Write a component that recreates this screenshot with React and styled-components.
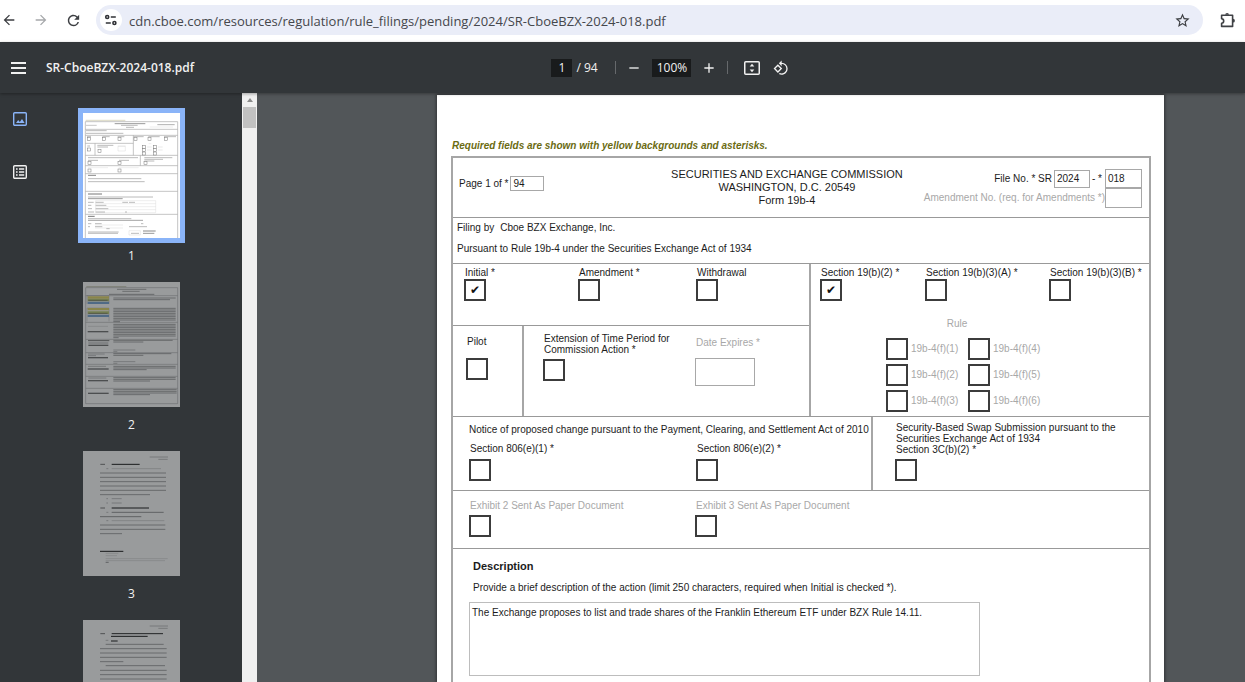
import React from "react";
import styled, { createGlobalStyle } from "styled-components";
import { MdArrowBack, MdArrowForward, MdRefresh, MdStarBorder, MdRotate90DegreesCcw, MdAdd, MdRemove } from "react-icons/md";

const UI_FONT = `"Open Sans", "Noto Sans", sans-serif`;
const DOC_FONT = `"Liberation Sans", Arial, sans-serif`;

const GlobalStyle = createGlobalStyle`
  *, *::before, *::after { box-sizing: border-box; }
  body { margin: 0; font-family: ${UI_FONT}; }
  button { padding: 0; border: 0; background: none; color: inherit; font: inherit; }
`;

const Shell = styled.div`
  display: flex;
  flex-direction: column;
  height: 100vh;
  overflow: hidden;
  background: #525659;
`;

/* ---------- browser bar ---------- */

const BrowserBar = styled.header`
  flex: none;
  display: flex;
  align-items: center;
  height: 42px;
  padding: 0 8px 2px 0;
  background: #fff;
  color: #3c3e42;
`;

const NavButton = styled.button`
  display: grid;
  place-items: center;
  width: 32px;
  height: 24px;
  color: ${(p) => (p.disabled ? "#a6a8ab" : "inherit")};
`;

const NavGroup = styled.nav`
  display: flex;
  flex: none;
  width: 96px;
  margin-left: -7px;
`;

const Omnibox = styled.div`
  flex: 1;
  display: flex;
  align-items: center;
  height: 30px;
  margin-left: 7px;
  padding: 0 13px 0 4px;
  border-radius: 15px;
  background: #eaedf8;
`;

const SiteButton = styled.button`
  display: grid;
  place-items: center;
  flex: none;
  width: 22px;
  height: 22px;
  border-radius: 50%;
  background: #fff;
`;

const UrlInput = styled.input`
  flex: 1;
  min-width: 0;
  height: 22px;
  margin: 0 8px 0 7px;
  padding: 2px 0 0;
  border: 0;
  outline: 0;
  background: none;
  color: #45474c;
  font: 13px/20px ${UI_FONT};
`;

const ExtensionButton = styled.button`
  display: grid;
  place-items: center;
  flex: none;
  width: 18px;
  height: 20px;
  margin-left: 16px;
`;

/* ---------- viewer toolbar ---------- */

const Toolbar = styled.div`
  flex: none;
  position: relative;
  z-index: 1;
  display: grid;
  grid-template-columns: 552fr auto 456fr;
  align-items: center;
  height: 51px;
  background: #323639;
  color: #f1f1f1;
  box-shadow: 0 1px 3px rgba(0, 0, 0, 0.35);
`;

const TitleArea = styled.div`
  display: flex;
  align-items: center;
  gap: 20px;
  padding-left: 10px;
`;

const IconButton = styled.button`
  display: grid;
  place-items: center;
  flex: none;
  width: 16px;
  height: 20px;
`;

const FileName = styled.h1`
  margin: 0;
  font-size: 12px;
  line-height: 20px;
  font-weight: 600;
  white-space: nowrap;
`;

const Controls = styled.div`
  display: flex;
  align-items: center;
  font-size: 12px;
  line-height: 18px;
`;

const ToolInput = styled.input`
  width: ${(p) => p.$width}px;
  height: 18px;
  padding: 0;
  border: 0;
  background: #191b1c;
  color: #f1f1f1;
  font: 12px/18px ${UI_FONT};
  text-align: center;
`;

const PageTotal = styled.span`
  width: 43px;
  padding-left: 4px;
  white-space: nowrap;
`;

const Divider = styled.span`
  width: 1px;
  height: 13px;
  background: #66696c;
`;

const ToolGroup = styled.div`
  display: flex;
  align-items: center;
  gap: 10px;
  padding: 0 10px;
`;

const ViewGroup = styled.div`
  display: flex;
  align-items: center;
  gap: 13px;
  padding-left: 16px;
`;

/* ---------- sidebar ---------- */

const Body = styled.div`
  flex: 1;
  min-height: 0;
  display: flex;
`;

const Sidebar = styled.aside`
  flex: none;
  display: flex;
  width: 257px;
  background: #323639;
`;

const ModeRail = styled.div`
  flex: none;
  display: flex;
  flex-direction: column;
  align-items: center;
  gap: 33px;
  width: 39px;
  padding-top: 16px;
`;

const ThumbList = styled.ol`
  flex: 1;
  display: flex;
  flex-direction: column;
  align-items: center;
  gap: 12px;
  margin: 0;
  padding: 15px 18px 0 0;
  overflow-y: auto;
  scrollbar-width: none;
  list-style: none;
`;

const ThumbItem = styled.li`
  flex: none;
  display: flex;
  flex-direction: column;
  align-items: center;
  gap: 4px;
  color: #f1f1f1;
  font-size: 12px;
  line-height: 18px;
`;

const ThumbButton = styled.button`
  padding: 5px;
  background: ${(p) => (p.$active ? "#8ab4f8" : "none")};
  svg { display: block; background: #fff; opacity: ${(p) => (p.$active ? 1 : 0.5)}; }
`;

const ScrollTrack = styled.div`
  flex: none;
  display: flex;
  flex-direction: column;
  align-items: center;
  width: 15px;
  background: #f0f0f0;
`;

const ScrollArrow = styled.span`
  margin: 5px 0;
  border: 3px solid transparent;
  border-top: 0;
  border-bottom: 4px solid #8b8b8b;
`;

const ScrollThumb = styled.span`
  width: 13px;
  height: 21px;
  background: #c1c1c1;
`;

/* ---------- document ---------- */

const Viewport = styled.main`
  flex: 1;
  min-width: 0;
  display: flex;
  padding: 2px 81px 0 180px;
  overflow: hidden;
`;

const Sheet = styled.article`
  flex: 1;
  min-width: 0;
  padding: 45px 13px 0 14px;
  background: #fff;
  color: #1c1c1c;
  box-shadow: 0 0 3px 1px rgba(0, 0, 0, 0.4);
  font: 10px/12px ${DOC_FONT};
`;

const RequiredNote = styled.p`
  margin: 0 0 4px 1px;
  color: #6b6b12;
  font-weight: bold;
  font-style: italic;
`;

const FormBox = styled.form`
  border: solid #a6a6a6;
  border-width: 2px 2px 0;
`;

const Band = styled.section`
  display: grid;
  grid-template-columns: ${(p) => p.$columns || "1fr"};
  height: ${(p) => p.$height}px;
  border-bottom: ${(p) => (p.$open ? "0" : "1px solid #999")};
`;

const Cell = styled.div`
  padding: ${(p) => p.$pad || "0"};
  border-left: ${(p) => (p.$ruled ? "2px solid #a6a6a6" : "0")};
`;

const HeadRow = styled.div`
  display: grid;
  grid-template-columns: 211fr auto 238fr;
  align-items: start;
  padding: 10px 7px 0 6px;
`;

const HeadSide = styled.div`
  display: flex;
  flex-direction: column;
  align-items: ${(p) => (p.$end ? "flex-end" : "flex-start")};
  padding-top: ${(p) => p.$top}px;
`;

const FormTitle = styled.h2`
  margin: 0;
  font-size: 11px;
  line-height: 13px;
  font-weight: normal;
  text-align: center;
`;

const FieldLabel = styled.label`
  display: flex;
  align-items: center;
  gap: ${(p) => p.$gap || 0}px;
  color: ${(p) => (p.$muted ? "#a8a8a8" : "inherit")};
  white-space: nowrap;
`;

const Inline = styled.div`
  display: flex;
  align-items: center;
  gap: 2px;
`;

const TextField = styled.input`
  width: ${(p) => p.$width}px;
  height: ${(p) => p.$height}px;
  padding: 0 2px;
  border: 1px solid #a8a8a8;
  border-radius: 0;
  background: #fff;
  color: #1c1c1c;
  font: 10px/12px ${DOC_FONT};
`;

const Line = styled.p`
  margin: 0;
  white-space: nowrap;
`;

const FilingLines = styled.div`
  display: flex;
  flex-direction: column;
  gap: 9px;
  padding: 4px 4px 0;
`;

const FilingBy = styled.span`
  margin-right: 6px;
`;

const CheckColumns = styled.div`
  display: grid;
  grid-template-columns: ${(p) => p.$columns};
  align-items: start;
`;

const ClearingColumns = styled(CheckColumns)`
  margin-top: 7px;
`;

const StackedCheck = styled.label`
  display: flex;
  flex-direction: column;
  align-items: flex-start;
  gap: ${(p) => p.$gap || 0}px;
  color: ${(p) => (p.$muted ? "#a8a8a8" : "inherit")};
  line-height: ${(p) => (p.$tight ? 11 : 12)}px;
  white-space: nowrap;
`;

const CheckText = styled.span`
  padding-left: 1px;
`;

const Tick = styled.input.attrs({ type: "checkbox" })`
  appearance: none;
  flex: none;
  display: grid;
  place-items: center;
  width: 22px;
  height: 22px;
  margin: 0;
  border: 2px solid #3c3c3c;
  background: #fff;
  color: #111;
  &:checked::after {
    content: "✔";
    font: 12px/16px "DejaVu Sans", sans-serif;
  }
`;

const DateLabel = styled.label`
  display: flex;
  flex-direction: column;
  gap: 9px;
  padding-top: 4px;
  color: #a8a8a8;
`;

const RuleBlock = styled.div`
  width: 156px;
  margin: 17px 0 0 66px;
  color: #a8a8a8;
`;

const RuleTitle = styled.p`
  margin: 0 14px 8px 0;
  text-align: center;
`;

const RuleGrid = styled.div`
  display: grid;
  grid-template-columns: 82px auto;
  gap: 4px 0;
`;

const SectionTitle = styled.h3`
  margin: 0 0 9px;
  font-size: 11px;
  line-height: 13px;
`;

const DescriptionBlock = styled.div`
  padding: 11px 16px 0;
`;

const DescriptionHead = styled.label`
  display: block;
  padding-left: 4px;
  margin-bottom: 8px;
`;

const DescriptionBox = styled.textarea`
  display: block;
  width: 77%;
  height: 74px;
  padding: 4px 2px;
  border: 1px solid #bdbdbd;
  resize: none;
  color: #1c1c1c;
  font: 10px/12px ${DOC_FONT};
`;

/* ---------- icons ---------- */

const SiteIcon = () => (
  <svg width="14" height="12" viewBox="0 0 14 12" fill="none" stroke="#303236" strokeWidth="1.6">
    <circle cx="3.2" cy="3" r="1.5" />
    <path d="M6.8 3h5M1.8 9h5" />
    <circle cx="10.4" cy="9" r="1.5" />
  </svg>
);

const PuzzleIcon = () => (
  <svg width="18" height="18" viewBox="0 0 18 18">
    <path d="M2.6 4.2h11v11.2h-11v-3.2c2.8-.2 2.8-4.2 0-4.4z" fill="none" stroke="#3f4145" strokeWidth="1.6" strokeLinejoin="round" />
    <path d="M6.2 3.8a1.9 1.9 0 0 1 3.8 0zM14 7.8a1.9 1.9 0 0 1 0 3.8z" fill="#3f4145" />
  </svg>
);

const MenuIcon = () => (
  <svg width="15" height="12" viewBox="0 0 15 12" fill="#f1f1f1">
    <path d="M0 0h15v2H0zM0 5h15v2H0zM0 10h15v2H0z" />
  </svg>
);

const FitIcon = () => (
  <svg width="16" height="14" viewBox="0 0 16 14">
    <rect x=".75" y=".75" width="14.5" height="12.5" rx="1" fill="none" stroke="#f1f1f1" strokeWidth="1.5" />
    <path d="M8 2.8 10.3 5.6H5.7zM8 11.2 5.7 8.4h4.6z" fill="#f1f1f1" />
  </svg>
);

const ImageIcon = () => (
  <svg width="14" height="14" viewBox="0 0 14 14">
    <rect x=".7" y=".7" width="12.6" height="12.6" rx="1" fill="none" stroke="#8ab4f8" strokeWidth="1.4" />
    <path d="M3 11 5.2 8l1.6 1.9L9 7l2.6 4z" fill="#8ab4f8" />
  </svg>
);

const OutlineIcon = () => (
  <svg width="14" height="14" viewBox="0 0 14 14">
    <rect x=".7" y=".7" width="12.6" height="12.6" rx="1" fill="none" stroke="#f1f1f1" strokeWidth="1.4" />
    <path d="M3 3.2h1.6v1.6H3zM6 3.2h5.2v1.6H6zM3 6.2h1.6v1.6H3zM6 6.2h5.2v1.6H6zM3 9.2h1.6v1.6H3zM6 9.2h5.2v1.6H6z" fill="#f1f1f1" />
  </svg>
);

/* ---------- page thumbnails ---------- */

/* each stroke is [x, y, width, thickness, colour] */
const Strokes = ({ items }) =>
  items.map(([x, y, w, t = 2, c = "#999"], i) => (
    <path key={i} d={`M${x} ${y}h${w}`} stroke={c} strokeWidth={t} />
  ));

const page1Text = [
  [8, 22, 119, 2, "#c9c4a4"], [9, 37, 32, 2, "#aaa"], [95, 32, 92, 3, "#999"], [114, 37, 50], [129, 43, 24],
  [223, 35, 52, 2, "#888"], [200, 42, 70, 1, "#ccc"], [9, 53, 62, 2], [9, 61, 112, 2],
  [12, 71, 12], [58, 71, 22], [104, 71, 20], [152, 71, 30], [196, 71, 34], [243, 71, 36],
  [13, 99, 8], [43, 97, 48], [43, 102, 32], [104, 99, 24, 1, "#ccc"], [197, 92, 8, 1, "#ccc"],
  [192, 102, 14, 1, "#bbb"], [225, 102, 14, 1, "#bbb"], [192, 111, 14, 1, "#bbb"], [225, 111, 14, 1, "#bbb"],
  [15, 134, 150], [15, 142, 30], [108, 142, 30], [184, 134, 84], [184, 139, 56], [184, 144, 30],
  [15, 164, 60, 1, "#ccc"], [107, 164, 60, 1, "#ccc"],
  [15, 187, 24, 3, "#888"], [15, 197, 160], [15, 206, 170],
  [15, 243, 42, 3, "#777"], [15, 252, 195], [15, 257, 104, 2, "#666"],
  [15, 268, 17], [38, 268, 24], [118, 268, 17], [138, 268, 18], [15, 277, 10], [38, 277, 32], [15, 287, 12], [38, 287, 38], [15, 297, 18], [38, 297, 28], [126, 297, 6],
  [15, 310, 20, 3, "#777"], [15, 317, 130], [15, 322, 165, 2, "#777"],
  [15, 332, 10], [36, 332, 20], [174, 332, 7], [15, 341, 6], [36, 341, 22], [138, 341, 54], [70, 347, 10],
  [15, 357, 92], [15, 361, 90], [144, 361, 24], [180, 354, 38, 3, "#888"], [180, 361, 34, 3, "#999"],
];
const page1Boxes = [
  [13, 74], [58, 74], [105, 74], [153, 74], [195, 74], [244, 74], [13, 105], [45, 109],
  [179, 98], [211, 98], [179, 107], [211, 107], [179, 117], [211, 117], [15, 145], [105, 145], [183, 145], [15, 168], [105, 168],
];

const Page1 = () => (
  <>
    <path
      d="M7 26h277M7 49h277M7 67h277M7 91h144M7 127h277M7 158h277M7 182h277M7 235h277M7 304h277M7 26v349M284 26v349M151 67v60M36 91v36M172 127v31"
      stroke="#a8a8a8"
      strokeWidth="2"
      fill="none"
    />
    <path d="M38 263h180v36H38zM38 272h180M38 281h180M38 290h180M138 353h34v13h-34zM105 100h22v14h-22zM36 336h84M36 345h84" stroke="#ccc" fill="none" />
    {page1Boxes.map(([x, y], i) => (
      <rect key={i} x={x} y={y} width="9" height="9" fill="#fff" stroke="#777" strokeWidth="1.5" />
    ))}
    <Strokes items={page1Text} />
  </>
);

const paragraph = (x, top, bottom, w, step, last, thickness = 2, color = "#6c6c6c") => {
  const rows = [];
  for (let y = top; y <= bottom; y += step) rows.push([x, y, y + step > bottom ? last : w, thickness, color]);
  return rows;
};

const page2Text = [
  [10, 14, 120, 2, "#aaa98a"], [102, 22, 88, 2, "#777"], [118, 28, 52, 2, "#777"], [78, 37, 136, 2, "#666"],
  ...paragraph(91, 48, 56, 187, 5, 170), ...paragraph(91, 79, 120, 187, 5, 20),
  ...paragraph(91, 127, 168, 187, 5, 16), ...paragraph(91, 175, 181, 178, 5, 90), [91, 204, 66], [91, 209, 12],
  ...paragraph(91, 215, 221, 174, 5, 90), [91, 239, 66], [91, 244, 12],
  ...paragraph(91, 253, 263, 187, 5, 100), ...paragraph(91, 287, 297, 187, 5, 110), ...paragraph(91, 323, 338, 190, 5, 110),
];

const page2Labels = [
  [16, 55, 58, 2, "#555"], [16, 94, 58, 2, "#555"], [15, 133, 60, 1, "#999"], [14, 149, 62, 4, "#666"],
  [15, 176, 64, 3, "#666"], [16, 183, 60, 2, "#777"], [16, 190, 60, 4, "#666"], [15, 216, 50], [15, 221, 24],
  [15, 227, 60, 4, "#666"], [15, 253, 54], [14, 261, 63, 4, "#666"], [16, 288, 54], [15, 296, 60, 4, "#666"], [15, 334, 62, 4, "#666"],
];

const Page2 = () => (
  <>
    <path
      d="M8 17h276M8 41h276M8 121h276M8 172h276M8 212h276M8 247h276M8 283h276M8 319h276M8 365h276M8 17v348M284 17v348"
      stroke="#909090"
      strokeWidth="1.5"
      fill="none"
    />
    <path d="M12 66V41h66v25M12 118V78h66v40" stroke="#888" fill="none" />
    <path d="M14 43h64v7H14zM14 78h64v7H14z" fill="#e2d45c" />
    <path d="M14 50h64v8H14zM14 88h64v8H14z" fill="#bccb69" />
    <path d="M14 59h64v7H14zM14 98h64v7H14z" fill="#6f9fd0" />
    <Strokes items={page2Text} />
    <Strokes items={page2Labels} />
  </>
);

const Page3 = () => (
  <Strokes
    items={[
      [200, 18, 55], [226, 25, 28], [52, 40, 14, 2, "#222"], [86, 40, 84, 3, "#000"],
      [70, 53, 6], [86, 53, 148, 1, "#777"], ...paragraph(51, 66, 131, 198, 13, 150),
      [70, 143, 5], [86, 143, 30], [70, 156, 5], [86, 156, 30], [52, 171, 14, 2, "#222"], [86, 171, 112, 3, "#000"],
      [70, 184, 6], [86, 184, 156, 2, "#555"], [51, 197, 124, 2, "#555"], [70, 209, 6], [86, 209, 158, 1, "#777"],
      ...paragraph(51, 222, 248, 196, 13, 66), [51, 301, 70, 3, "#000"],
      [68, 307, 38, 1], [68, 314, 34, 1], [68, 323, 186, 1], [68, 329, 178, 1], [68, 334, 9, 2, "#555"],
    ]}
  />
);

const Page4 = () => (
  <Strokes
    items={[
      [200, 18, 55], [226, 25, 28], [52, 41, 14, 2, "#222"], [86, 41, 154, 3, "#111"], [84, 49, 110, 3, "#000"],
      [68, 61, 8], [84, 63, 20, 3, "#000"], [68, 73, 174, 2, "#6c6c6c"], ...paragraph(51, 86, 125, 200, 13, 70),
      [68, 137, 178, 2, "#6c6c6c"], ...paragraph(51, 151, 330, 200, 13, 90),
    ]}
  />
);

const pages = [Page1, Page2, Page3, Page4];

const Stacked = ({ text, gap, muted, tight, checked }) => (
  <StackedCheck $gap={gap} $muted={muted} $tight={tight}>
    <CheckText>{text}</CheckText>
    <Tick defaultChecked={checked} />
  </StackedCheck>
);

const rules = ["19b-4(f)(1)", "19b-4(f)(4)", "19b-4(f)(2)", "19b-4(f)(5)", "19b-4(f)(3)", "19b-4(f)(6)"];

export default function App() {
  return (
    <Shell>
      <GlobalStyle />
      <BrowserBar>
        <NavGroup>
          <NavButton aria-label="Back"><MdArrowBack size={16} /></NavButton>
          <NavButton aria-label="Forward" disabled><MdArrowForward size={16} /></NavButton>
          <NavButton aria-label="Reload"><MdRefresh size={17} /></NavButton>
        </NavGroup>
        <Omnibox>
          <SiteButton aria-label="Site information"><SiteIcon /></SiteButton>
          <UrlInput aria-label="Address" defaultValue="cdn.cboe.com/resources/regulation/rule_filings/pending/2024/SR-CboeBZX-2024-018.pdf" />
          <IconButton aria-label="Bookmark"><MdStarBorder size={17} /></IconButton>
        </Omnibox>
        <ExtensionButton aria-label="Extensions"><PuzzleIcon /></ExtensionButton>
      </BrowserBar>

      <Toolbar>
        <TitleArea>
          <IconButton aria-label="Menu"><MenuIcon /></IconButton>
          <FileName>SR-CboeBZX-2024-018.pdf</FileName>
        </TitleArea>
        <Controls>
          <ToolInput $width={21} aria-label="Page number" defaultValue="1" />
          <PageTotal>/ 94</PageTotal>
          <Divider />
          <ToolGroup>
            <IconButton aria-label="Zoom out"><MdRemove size={16} /></IconButton>
            <ToolInput $width={39} aria-label="Zoom level" defaultValue="100%" />
            <IconButton aria-label="Zoom in"><MdAdd size={16} /></IconButton>
          </ToolGroup>
          <Divider />
          <ViewGroup>
            <IconButton aria-label="Fit to page"><FitIcon /></IconButton>
            <IconButton aria-label="Rotate counterclockwise"><MdRotate90DegreesCcw size={16} /></IconButton>
          </ViewGroup>
        </Controls>
      </Toolbar>

      <Body>
        <Sidebar>
          <ModeRail>
            <IconButton aria-label="Thumbnails"><ImageIcon /></IconButton>
            <IconButton aria-label="Document outline"><OutlineIcon /></IconButton>
          </ModeRail>
          <ThumbList>
            {pages.map((Drawing, i) => (
              <ThumbItem key={i}>
                <ThumbButton $active={i === 0} aria-label={`Page ${i + 1}`}>
                  <svg width="97" height="125" viewBox="0 0 291 375"><Drawing /></svg>
                </ThumbButton>
                {i + 1}
              </ThumbItem>
            ))}
          </ThumbList>
          <ScrollTrack>
            <ScrollArrow />
            <ScrollThumb />
          </ScrollTrack>
        </Sidebar>

        <Viewport>
          <Sheet>
            <RequiredNote>Required fields are shown with yellow backgrounds and asterisks.</RequiredNote>
            <FormBox>
              <Band $height={60}>
                <HeadRow>
                  <HeadSide $top={8}>
                    <FieldLabel $gap={2}>Page 1 of *<TextField $width={34} $height={15} defaultValue="94" /></FieldLabel>
                  </HeadSide>
                  <FormTitle>
                    SECURITIES AND EXCHANGE COMMISSION<br />WASHINGTON, D.C. 20549<br />Form 19b-4
                  </FormTitle>
                  <HeadSide $end $top={1}>
                    <Inline>
                      <FieldLabel $gap={2}>File No. * SR<TextField $width={36} $height={18} defaultValue="2024" /></FieldLabel>
                      <FieldLabel $gap={3}>- *<TextField $width={37} $height={19} defaultValue="018" /></FieldLabel>
                    </Inline>
                    <FieldLabel $muted>Amendment No. (req. for Amendments *)<TextField $width={37} $height={20} /></FieldLabel>
                  </HeadSide>
                </HeadRow>
              </Band>

              <Band $height={46}>
                <FilingLines>
                  <Line><FilingBy>Filing by</FilingBy>Cboe BZX Exchange, Inc.</Line>
                  <Line>Pursuant to Rule 19b-4 under the Securities Exchange Act of 1934</Line>
                </FilingLines>
              </Band>

              <Band $height={153} $columns="356px 1fr">
                <div>
                  <Band $height={62}>
                    <Cell $pad="3px 0 0 11px">
                      <CheckColumns $columns="114px 118px auto">
                        <Stacked text="Initial *" checked />
                        <Stacked text="Amendment *" />
                        <Stacked text="Withdrawal" />
                      </CheckColumns>
                    </Cell>
                  </Band>
                  <Band $height={90} $columns="69px 1fr" $open>
                    <Cell $pad="10px 0 0 13px">
                      <Stacked text="Pilot" gap={10} />
                    </Cell>
                    <Cell $ruled $pad="7px 0 0 19px">
                      <CheckColumns $columns="152px auto">
                        <Stacked text={<>Extension of Time Period for<br />Commission Action *</>} gap={4} tight />
                        <DateLabel>
                          <CheckText>Date Expires *</CheckText>
                          <TextField $width={60} $height={28} />
                        </DateLabel>
                      </CheckColumns>
                    </Cell>
                  </Band>
                </div>
                <Cell $ruled $pad="3px 0 0 9px">
                  <CheckColumns $columns="105px 124px auto">
                    <Stacked text="Section 19(b)(2) *" checked />
                    <Stacked text="Section 19(b)(3)(A) *" />
                    <Stacked text="Section 19(b)(3)(B) *" />
                  </CheckColumns>
                  <RuleBlock role="group" aria-label="Rule">
                    <RuleTitle>Rule</RuleTitle>
                    <RuleGrid>
                      {rules.map((rule) => (
                        <FieldLabel key={rule} $gap={3}><Tick />{rule}</FieldLabel>
                      ))}
                    </RuleGrid>
                  </RuleBlock>
                </Cell>
              </Band>

              <Band $height={74} $columns="418px 1fr">
                <Cell $pad="7px 0 0 16px">
                  <Line>Notice of proposed change pursuant to the Payment, Clearing, and Settlement Act of 2010</Line>
                  <ClearingColumns $columns="227px auto">
                    <Stacked text="Section 806(e)(1) *" gap={4} />
                    <Stacked text="Section 806(e)(2) *" gap={4} />
                  </ClearingColumns>
                </Cell>
                <Cell $ruled $pad="5px 0 0 22px">
                  <Stacked
                    text={<>Security-Based Swap Submission pursuant to the<br />Securities Exchange Act of 1934<br />Section 3C(b)(2) *</>}
                    gap={4}
                    tight
                  />
                </Cell>
              </Band>

              <Band $height={58}>
                <Cell $pad="9px 0 0 16px">
                  <CheckColumns $columns="226px auto">
                    <Stacked text="Exhibit 2 Sent As Paper Document" gap={3} muted />
                    <Stacked text="Exhibit 3 Sent As Paper Document" gap={3} muted />
                  </CheckColumns>
                </Cell>
              </Band>

              <Band $height={300}>
                <DescriptionBlock>
                  <DescriptionHead htmlFor="description">
                    <SectionTitle>Description</SectionTitle>
                    Provide a brief description of the action (limit 250 characters, required when Initial is checked *).
                  </DescriptionHead>
                  <DescriptionBox
                    id="description"
                    defaultValue="The Exchange proposes to list and trade shares of the Franklin Ethereum ETF under BZX Rule 14.11."
                  />
                </DescriptionBlock>
              </Band>
            </FormBox>
          </Sheet>
        </Viewport>
      </Body>
    </Shell>
  );
}
